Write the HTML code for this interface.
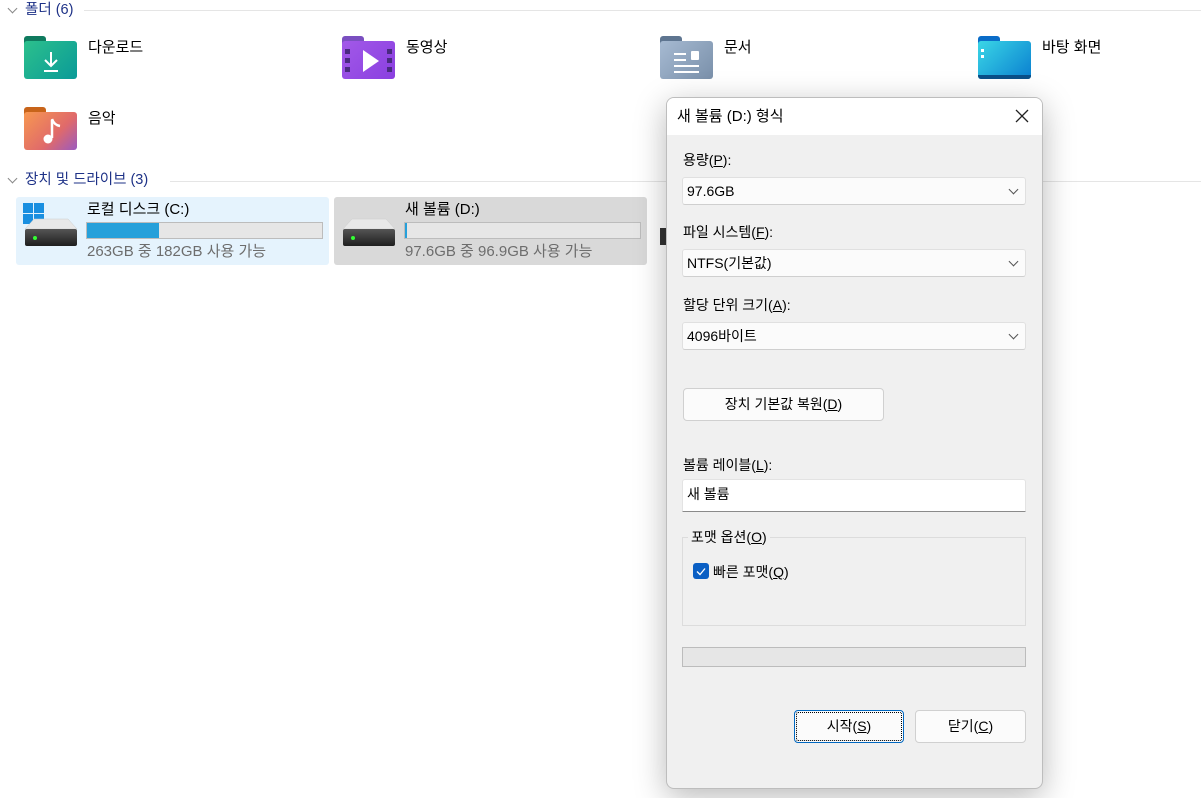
<!DOCTYPE html>
<html><head><meta charset="utf-8">
<style>
*{margin:0;padding:0;box-sizing:border-box}
body{width:1201px;height:798px;overflow:hidden;background:#fff;font-family:"Liberation Sans","Noto Sans CJK KR",sans-serif;font-size:14px;color:#000;position:relative}
.a{position:absolute}
.hdr{color:#1e3287;font-size:14.5px}
.line{height:1px;background:#e5e5e5}
.chev{width:7px;height:7px;border-right:1px solid #888;border-bottom:1px solid #888;transform:rotate(45deg)}
.fold{width:53px;height:43px}
.tab{position:absolute;left:0;top:0;width:22px;height:10px;border-radius:3px 3px 0 0}
.body{position:absolute;left:0;top:5px;width:53px;height:38px;border-radius:3px}
.lbl{font-size:15px}
.tile{position:absolute;height:68px;top:197px}
.bar{position:absolute;height:17px;border:1px solid #bcbcbc;background:#e6e6e6}
.sub{color:#6d6d6d;font-size:15px}
.u{text-decoration:underline}
.dd{position:absolute;left:682px;width:344px;height:28px;background:#fbfbfb;border:1px solid #e0e0e0;border-bottom-color:#cfcfcf;border-radius:3px;padding-left:4px;line-height:26px;font-size:14px}
.dd:after{content:"";position:absolute;right:8px;top:8px;width:6px;height:6px;border-right:1px solid #555;border-bottom:1px solid #555;transform:rotate(45deg)}
.btn{position:absolute;background:#fbfbfb;border:1px solid #d0d0d0;border-radius:4px;text-align:center;font-size:14px}
</style></head><body>

<div class="a chev" style="left:9px;top:5px"></div>
<div class="a hdr" style="left:25px;top:0px;line-height:20px">폴더 (6)</div>
<div class="a line" style="left:84px;top:10px;width:1117px"></div>

<div class="a fold" style="left:24px;top:36px">
 <div class="tab" style="background:#0f7a5e"></div>
 <div class="body" style="background:linear-gradient(135deg,#2cc08c,#0a9a98)"></div>
 <svg class="a" style="left:15px;top:14px" width="24" height="24"><path d="M12 2v13M6 10l6 6 6-6M5 21h14" stroke="#fff" stroke-width="2" fill="none"/></svg>
</div>
<div class="a lbl" style="left:88px;top:36px">다운로드</div>

<div class="a fold" style="left:342px;top:36px">
 <div class="tab" style="background:#7a4fc0"></div>
 <div class="body" style="background:linear-gradient(135deg,#a259e8,#8a3fe0)"></div>
 <svg class="a" style="left:0;top:8px" width="53" height="35"><g fill="#4a2a80"><rect x="3" y="5" width="5" height="5"/><rect x="3" y="14" width="5" height="5"/><rect x="3" y="23" width="5" height="5"/><rect x="45" y="5" width="5" height="5"/><rect x="45" y="14" width="5" height="5"/><rect x="45" y="23" width="5" height="5"/></g><path d="M21 6v22l16-11z" fill="#fff"/></svg>
</div>
<div class="a lbl" style="left:406px;top:36px">동영상</div>

<div class="a fold" style="left:660px;top:36px">
 <div class="tab" style="background:#5e7590"></div>
 <div class="body" style="background:linear-gradient(135deg,#a6bad2,#7a90aa)"></div>
 <svg class="a" style="left:0;top:0" width="53" height="43"><g fill="#fff"><rect x="14" y="17" width="12" height="2"/><rect x="14" y="23" width="12" height="2"/><rect x="14" y="29" width="25" height="2"/><rect x="14" y="35" width="25" height="2"/><rect x="31" y="15" width="8" height="9" rx="1"/></g></svg>
</div>
<div class="a lbl" style="left:724px;top:36px">문서</div>

<div class="a fold" style="left:978px;top:36px">
 <div class="tab" style="background:#0a6cc8"></div>
 <div class="body" style="background:linear-gradient(135deg,#3ad6e6,#0a7fd0)"></div>
 <div class="a" style="left:0;top:39px;width:53px;height:4px;background:#0a4f88;border-radius:0 0 3px 3px"></div>
 <div class="a" style="left:3px;top:13px;width:3px;height:3px;background:#fff"></div>
 <div class="a" style="left:3px;top:19px;width:3px;height:3px;background:#fff"></div>
</div>
<div class="a lbl" style="left:1042px;top:36px">바탕 화면</div>

<div class="a fold" style="left:24px;top:107px">
 <div class="tab" style="background:#c8641a"></div>
 <div class="body" style="background:linear-gradient(135deg,#f79850,#e06a6a 60%,#9a5ac0)"></div>
 <svg class="a" style="left:0;top:0" width="53" height="43"><path d="M28 13v18" stroke="#fff" stroke-width="2.5"/><circle cx="24" cy="32" r="4.5" fill="#fff"/><path d="M28 12q2 6 8 7" stroke="#fff" stroke-width="2.5" fill="none"/></svg>
</div>
<div class="a lbl" style="left:88px;top:107px">음악</div>

<div class="a chev" style="left:9px;top:175px"></div>
<div class="a hdr" style="left:25px;top:170px;line-height:20px">장치 및 드라이브 (3)</div>
<div class="a line" style="left:170px;top:181px;width:1031px"></div>

<div class="tile" style="left:16px;width:313px;background:#e5f3fd;border-radius:3px"></div>
<div class="tile" style="left:334px;width:313px;background:#d9d9d9;border-radius:3px"></div>

<svg class="a" style="left:23px;top:203px" width="21" height="21"><g fill="#1a8fe0"><rect x="0" y="0" width="10" height="10"/><rect x="11" y="0" width="10" height="10"/><rect x="0" y="11" width="10" height="10"/><rect x="11" y="11" width="10" height="10"/></g></svg>
<svg class="a" style="left:24px;top:218px" width="54" height="30"><defs><linearGradient id="g" x1="0" y1="0" x2="0" y2="1"><stop offset="0" stop-color="#555"/><stop offset="1" stop-color="#1e1e1e"/></linearGradient></defs><path d="M10 1h34l9 10H1z" fill="#e8e8e8" stroke="#ccc" stroke-width=".5"/><rect x="1" y="11" width="52" height="17" fill="url(#g)" rx="2"/><circle cx="11" cy="20" r="2" fill="#3f3"/></svg>
<div class="a" style="left:87px;top:198px;font-size:15px">로컬 디스크 (C:)</div>
<div class="bar" style="left:86px;top:222px;width:237px"><div style="width:72px;height:15px;background:#26a0da"></div></div>
<div class="a sub" style="left:87px;top:240px">263GB 중 182GB 사용 가능</div>

<svg class="a" style="left:342px;top:218px" width="54" height="30"><path d="M10 1h34l9 10H1z" fill="#e8e8e8" stroke="#ccc" stroke-width=".5"/><rect x="1" y="11" width="52" height="17" fill="url(#g)" rx="2"/><circle cx="11" cy="20" r="2" fill="#3f3"/></svg>
<div class="a" style="left:405px;top:198px;font-size:15px">새 볼륨 (D:)</div>
<div class="bar" style="left:404px;top:222px;width:237px"><div style="width:2px;height:15px;background:#26a0da"></div></div>
<div class="a sub" style="left:405px;top:240px">97.6GB 중 96.9GB 사용 가능</div>
<div class="a" style="left:660px;top:228px;width:8px;height:17px;background:#333"></div>

<div class="a" style="left:666px;top:97px;width:377px;height:692px;background:#f0f0f0;border:1px solid #bdbdbd;border-radius:8px;box-shadow:0 8px 32px rgba(0,0,0,.28);overflow:hidden">
 <div style="height:37px;background:#fff;position:relative">
  <div class="a" style="left:10px;top:7px;font-size:15px">새 볼륨 (D:) 형식</div>
  <svg class="a" style="left:348px;top:11px" width="14" height="14"><path d="M1 1l12 12M13 1L1 13" stroke="#222" stroke-width="1.3"/></svg>
 </div>
</div>
<div class="a" style="left:683px;top:150px">용량(<span class="u">P</span>):</div>
<div class="dd" style="top:177px">97.6GB</div>
<div class="a" style="left:683px;top:222px">파일 시스템(<span class="u">F</span>):</div>
<div class="dd" style="top:249px">NTFS(기본값)</div>
<div class="a" style="left:683px;top:295px">할당 단위 크기(<span class="u">A</span>):</div>
<div class="dd" style="top:322px">4096바이트</div>

<div class="btn" style="left:683px;top:388px;width:201px;height:33px;line-height:31px">장치 기본값 복원(<span class="u">D</span>)</div>

<div class="a" style="left:683px;top:455px">볼륨 레이블(<span class="u">L</span>):</div>
<div class="a" style="left:682px;top:479px;width:344px;height:33px;background:#fff;border:1px solid #e3e3e3;border-bottom:1px solid #8a8a8a;border-radius:3px 3px 0 0;padding-left:4px;line-height:28px">새 볼륨</div>

<div class="a" style="left:682px;top:537px;width:344px;height:89px;border:1px solid #dcdcdc"></div>
<div class="a" style="left:688px;top:527px;background:#f0f0f0;padding:0 3px">포맷 옵션(<span class="u">O</span>)</div>
<div class="a" style="left:693px;top:563px;width:16px;height:16px;background:#0a5fc4;border-radius:3px"></div>
<svg class="a" style="left:693px;top:563px" width="16" height="16"><path d="M4 8.5l3 3 5-6" stroke="#fff" stroke-width="1.3" fill="none"/></svg>
<div class="a" style="left:713px;top:562px">빠른 포맷(<span class="u">Q</span>)</div>

<div class="a" style="left:682px;top:647px;width:344px;height:20px;background:#e6e6e6;border:1px solid #bcbcbc"></div>

<div class="btn" style="left:794px;top:710px;width:110px;height:33px;line-height:31px;border:1px solid #0067c0;outline:1px dotted #000;outline-offset:-3px">시작(<span class="u">S</span>)</div>
<div class="btn" style="left:915px;top:710px;width:111px;height:33px;line-height:31px">닫기(<span class="u">C</span>)</div>
</body></html>
